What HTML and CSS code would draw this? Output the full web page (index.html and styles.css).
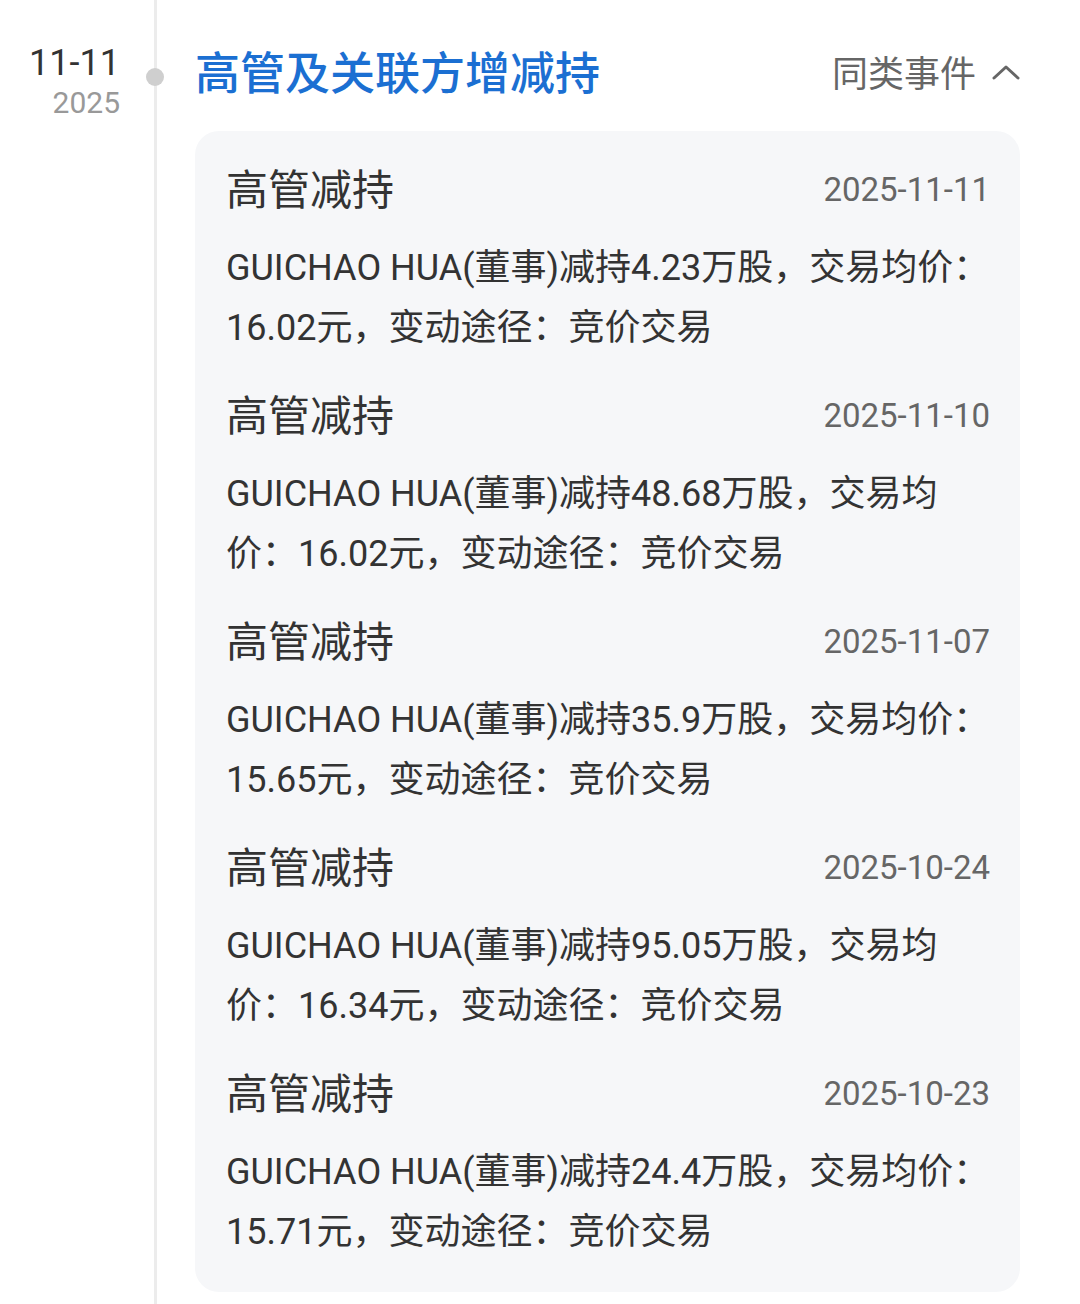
FILE: index.html
```html
<!DOCTYPE html>
<html lang="zh-CN">
<head>
<meta charset="UTF-8" />
<meta name="viewport" content="width=device-width, initial-scale=1" />
<title>高管及关联方增减持</title>
<link rel="stylesheet" href="styles.css">
</head>
<body>

<div class="event">
  <div class="date-col">
    <div class="md">11-11</div>
    <div class="yr">2025</div>
  </div>

  <div class="rail"><span class="dot"></span></div>

  <div class="main">
    <div class="head">
      <h2 class="head-title">高管及关联方增减持</h2>
      <div class="similar">
        同类事件
        <svg class="chevron" width="28" height="16" viewBox="0 0 28 16">
          <path d="M2 14 L14 3 L26 14" fill="none" stroke="#666" stroke-width="3" stroke-linecap="round" stroke-linejoin="round" />
        </svg>
      </div>
    </div>

    <div class="card">
      <div class="item">
        <div class="item-top">
          <span class="item-title">高管减持</span>
          <span class="item-date">2025-11-11</span>
        </div>
        <p class="item-text">GUICHAO HUA(董事)减持4.23万股，交易均价：16.02元，变动途径：竞价交易</p>
      </div>

      <div class="item">
        <div class="item-top">
          <span class="item-title">高管减持</span>
          <span class="item-date">2025-11-10</span>
        </div>
        <p class="item-text">GUICHAO HUA(董事)减持48.68万股，交易均价：16.02元，变动途径：竞价交易</p>
      </div>

      <div class="item">
        <div class="item-top">
          <span class="item-title">高管减持</span>
          <span class="item-date">2025-11-07</span>
        </div>
        <p class="item-text">GUICHAO HUA(董事)减持35.9万股，交易均价：15.65元，变动途径：竞价交易</p>
      </div>

      <div class="item">
        <div class="item-top">
          <span class="item-title">高管减持</span>
          <span class="item-date">2025-10-24</span>
        </div>
        <p class="item-text">GUICHAO HUA(董事)减持95.05万股，交易均价：16.34元，变动途径：竞价交易</p>
      </div>

      <div class="item">
        <div class="item-top">
          <span class="item-title">高管减持</span>
          <span class="item-date">2025-10-23</span>
        </div>
        <p class="item-text">GUICHAO HUA(董事)减持24.4万股，交易均价：15.71元，变动途径：竞价交易</p>
      </div>
    </div>
  </div>
</div>

</body>
</html>
```

FILE: styles.css
```css
body {
  margin: 0;
  background: #fff;
  color: #333;
  font-family: Roboto, "Noto Sans CJK SC", sans-serif;
}

.event {
  display: flex;
  min-height: 1304px;
}

/* left date column */
.date-col {
  width: 120px;
  flex-shrink: 0;
  text-align: right;
  padding-top: 43px;
}

.md {
  font-size: 36px;
  line-height: 40px;
  color: #333;
}

.yr {
  margin-top: 3px;
  font-size: 30px;
  line-height: 34px;
  color: #999;
}

/* vertical timeline */
.rail {
  width: 75px;
  flex-shrink: 0;
  background: linear-gradient(#ececec, #ececec) no-repeat 34px 0 / 3px 100%;
}

.dot {
  display: block;
  width: 18px;
  height: 18px;
  border-radius: 50%;
  background: #cfcfcf;
  margin: 68px 0 0 26px;
}

.main {
  flex: 1;
  padding: 45px 60px 0 0;
}

.head {
  display: flex;
  align-items: center;
  justify-content: space-between;
  margin-bottom: 28px;
}

.head-title {
  margin: 0;
  font-size: 45px;
  line-height: 57px;
  font-weight: 500;
  color: #1b6fd2;
}

.similar {
  display: flex;
  align-items: center;
  gap: 16px;
  margin-bottom: 6px;
  font-size: 36px;
  color: #666;
}

.chevron {
  margin-top: 2px;
}

/* event card */
.card {
  background: #f6f7f9;
  border-radius: 24px;
  padding: 27px 30px 30px 31px;
}

.item + .item {
  margin-top: 26px;
}

.item-top {
  display: flex;
  align-items: center;
  justify-content: space-between;
  height: 56px;
}

.item-title {
  font-size: 42px;
  color: #333;
}

.item-date {
  margin-top: 6px;
  font-size: 33px;
  color: #666;
}

.item-text {
  margin: 24px -10px 0 0;
  font-size: 36px;
  line-height: 60px;
  color: #333;
}
```
